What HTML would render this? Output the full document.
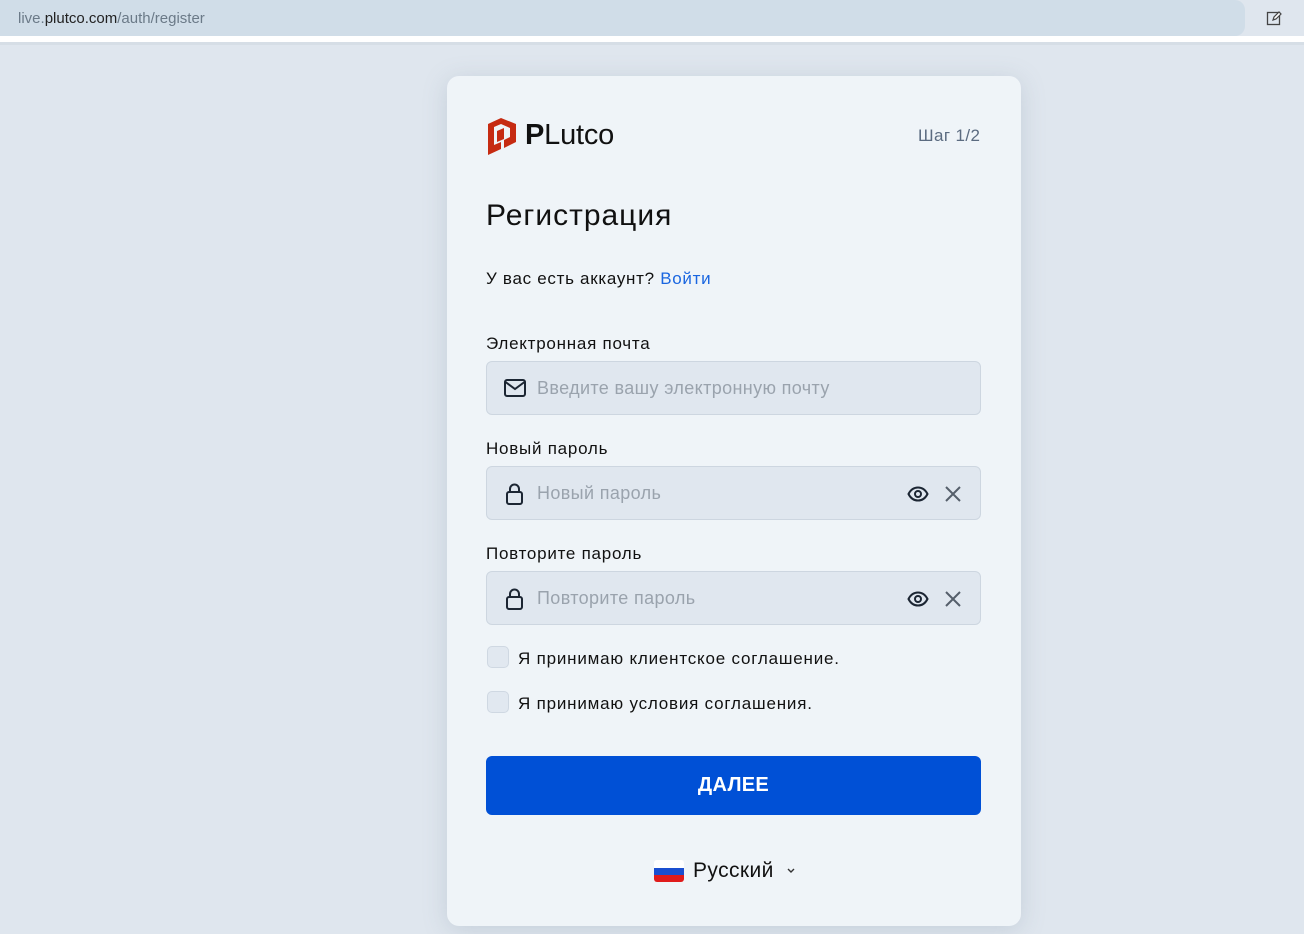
<!DOCTYPE html>
<html><head><meta charset="utf-8"><style>
*{box-sizing:border-box;margin:0;padding:0}
body{width:1304px;height:934px;overflow:hidden;background:#dfe6ee;font-family:"Liberation Sans",Arial,sans-serif;position:relative}
.bar{position:absolute;left:0;top:0;width:1245px;height:36px;background:#d0dde8;border-radius:0 10px 10px 0}
.url{position:absolute;left:18px;top:10px;font-size:15px;color:#6b7a88}
.url b{font-weight:normal;color:#222}
.strip{position:absolute;left:0;top:36px;width:1304px;height:6px;background:#fff}
.line{position:absolute;left:0;top:42px;width:1304px;height:3px;background:#d6dee6}
.card{position:absolute;left:447px;top:76px;width:574px;height:850px;background:#eff4f8;border-radius:12px;box-shadow:0 4px 24px rgba(120,140,160,.25)}
.abs{position:absolute}
.lbl{position:absolute;left:39px;font-size:17px;color:#111;letter-spacing:.75px}
.inp{position:absolute;left:39px;width:495px;height:54px;background:#e0e7ef;border:1px solid #cdd6e0;border-radius:6px}
.ph{position:absolute;left:50px;top:16px;font-size:18px;color:#9aa3ad;letter-spacing:.37px}
.cb{position:absolute;left:40px;width:22px;height:22px;border:1px solid #cfd8e2;background:#e1e8f0;border-radius:5px}
.cbt{position:absolute;left:71px;font-size:17px;color:#111;letter-spacing:.8px}
</style></head><body>
<div class="bar"><div class="url">live.<b>plutco.com</b>/auth/register</div></div>
<svg class="abs" style="left:1266px;top:10px" width="17" height="17" viewBox="0 0 17 17"><rect x="1.5" y="2.5" width="12" height="12" fill="none" stroke="#444" stroke-width="1.3"/><path d="M7 10l1-3 5-5 2 2-5 5z" fill="#fff" stroke="#444" stroke-width="1.2"/></svg>
<div class="strip"></div><div class="line"></div>
<div class="card">
 <svg class="abs" style="left:40px;top:42px" width="30" height="38" viewBox="0 0 30 38"><path d="M14 0L29 6V24L17 30V22L23 19V10L14 6L7 9V27L14 24V31L1 37V6Z" fill="#c62b12"/><path d="M10 13L17 10V21L10 24Z" fill="#c62b12"/></svg>
 <div class="abs" style="left:78px;top:43px;font-size:29px;color:#111;letter-spacing:-0.2px"><b>P</b>Lutco</div>
 <div class="abs" style="left:471px;top:50px;font-size:17px;color:#5b6b80;letter-spacing:.4px">Шаг 1/2</div>
 <div class="abs" style="left:39px;top:123px;font-size:30px;color:#111;letter-spacing:1px">Регистрация</div>
 <div class="abs" style="left:39px;top:193px;font-size:17px;color:#111;letter-spacing:.7px">У вас есть аккаунт? <span style="color:#1a66e0">Войти</span></div>
 <div class="lbl" style="top:258px">Электронная почта</div>
 <div class="inp" style="top:285px"><svg class="abs" style="left:16px;top:16px" width="24" height="20" viewBox="0 0 24 20"><rect x="2" y="2" width="20" height="16" rx="2" fill="none" stroke="#1c2633" stroke-width="2"/><path d="M2.5 4l9.5 7 9.5-7" fill="none" stroke="#1c2633" stroke-width="2"/></svg><div class="ph">Введите вашу электронную почту</div></div>
 <div class="lbl" style="top:363px">Новый пароль</div>
 <div class="inp" style="top:390px"><svg class="abs" style="left:18px;top:15px" width="20" height="24" viewBox="0 0 20 24"><rect x="2" y="10" width="15" height="12" rx="2" fill="none" stroke="#1c2633" stroke-width="2"/><path d="M5 10V7a4.5 4.5 0 0 1 9 0v3" fill="none" stroke="#1c2633" stroke-width="2"/></svg><div class="ph">Новый пароль</div>
 <svg class="abs" style="left:420px;top:18px" width="22" height="18" viewBox="0 0 22 18"><path d="M1.5 9C4 4 7.5 2.5 11 2.5S18 4 20.5 9C18 14 14.5 15.5 11 15.5S4 14 1.5 9Z" fill="none" stroke="#1c2633" stroke-width="2"/><circle cx="11" cy="9" r="3" fill="none" stroke="#1c2633" stroke-width="2"/></svg>
 <svg class="abs" style="left:457px;top:18px" width="18" height="18" viewBox="0 0 18 18"><path d="M2 2L16 16M16 2L2 16" stroke="#555f6b" stroke-width="2"/></svg></div>
 <div class="lbl" style="top:468px">Повторите пароль</div>
 <div class="inp" style="top:495px"><svg class="abs" style="left:18px;top:15px" width="20" height="24" viewBox="0 0 20 24"><rect x="2" y="10" width="15" height="12" rx="2" fill="none" stroke="#1c2633" stroke-width="2"/><path d="M5 10V7a4.5 4.5 0 0 1 9 0v3" fill="none" stroke="#1c2633" stroke-width="2"/></svg><div class="ph">Повторите пароль</div>
 <svg class="abs" style="left:420px;top:18px" width="22" height="18" viewBox="0 0 22 18"><path d="M1.5 9C4 4 7.5 2.5 11 2.5S18 4 20.5 9C18 14 14.5 15.5 11 15.5S4 14 1.5 9Z" fill="none" stroke="#1c2633" stroke-width="2"/><circle cx="11" cy="9" r="3" fill="none" stroke="#1c2633" stroke-width="2"/></svg>
 <svg class="abs" style="left:457px;top:18px" width="18" height="18" viewBox="0 0 18 18"><path d="M2 2L16 16M16 2L2 16" stroke="#555f6b" stroke-width="2"/></svg></div>
 <div class="cb" style="top:570px"></div><div class="cbt" style="top:573px">Я принимаю клиентское соглашение.</div>
 <div class="cb" style="top:615px"></div><div class="cbt" style="top:618px">Я принимаю условия соглашения.</div>
 <div class="abs" style="left:39px;top:680px;width:495px;height:59px;background:#0050d6;border-radius:6px;color:#fff;font-weight:bold;font-size:20px;text-align:center;line-height:59px;letter-spacing:.3px">ДАЛЕЕ</div>
 <svg class="abs" style="left:207px;top:784px" width="30" height="22" viewBox="0 0 30 22"><clipPath id="c"><rect width="30" height="22" rx="3"/></clipPath><g clip-path="url(#c)"><rect width="30" height="8" fill="#fff"/><rect y="8" width="30" height="7" fill="#1a4fd0"/><rect y="15" width="30" height="7" fill="#e01b1b"/></g></svg>
 <div class="abs" style="left:246px;top:783px;font-size:21px;color:#111;letter-spacing:.4px">Русский</div>
 <svg class="abs" style="left:339px;top:791px" width="10" height="8" viewBox="0 0 10 8"><path d="M2 2l3 3 3-3" fill="none" stroke="#333" stroke-width="1.4"/></svg>
</div>
</body></html>
